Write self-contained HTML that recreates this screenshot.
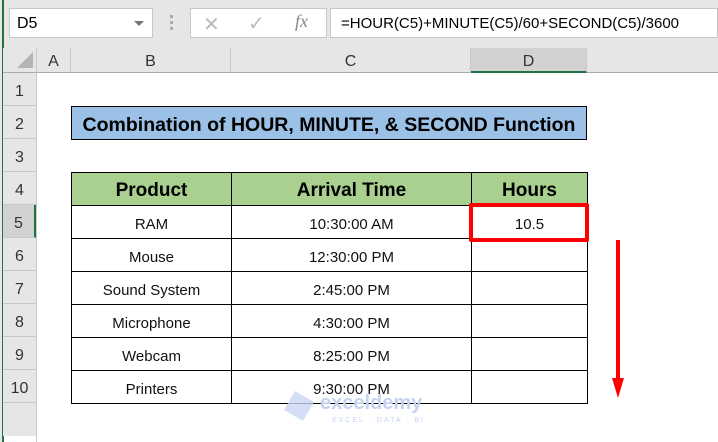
<!DOCTYPE html><html><head><style>
body{margin:0;width:718px;height:442px;overflow:hidden;background:#fff;font-family:"Liberation Sans",Arial,sans-serif;position:relative}
.a{position:absolute;box-sizing:border-box}
.rh{position:absolute;left:3px;width:33px;height:33px;background:#e6e6e6;border-bottom:1px solid #c8c8c8;font-size:16px;color:#333;text-align:center;line-height:38px;box-sizing:border-box}
.ch{position:absolute;top:48px;height:25px;border-right:1px solid #c8c8c8;font-size:16px;color:#333;text-align:center;line-height:28px;box-sizing:border-box;background:#e6e6e6;border-bottom:1px solid #ababab}
table{position:absolute;left:71px;top:172px;border-collapse:collapse}
td{border:1px solid #000;height:33px;padding:5px 0 0;box-sizing:border-box;text-align:center;font-size:15px;color:#111}
th{border:1px solid #000;height:33px;background:#a9d08e;font-size:19px;font-weight:bold;padding:4px 0 0;box-sizing:border-box}
</style></head><body>
<div class="a" style="left:0;top:0;width:718px;height:48px;background:#e6e6e6"></div>
<div class="a" style="left:0;top:0;width:3px;height:442px;background:#e6e6e6"></div>
<div class="a" style="left:2px;top:0;width:2px;height:442px;background:#217346"></div>
<div class="a" style="left:9px;top:8px;width:144px;height:30px;background:#fff;border:1px solid #c6c6c6;font-size:16px;padding:6px 0 0 7px">D5<span style="position:absolute;right:8px;top:12px;border:5px solid transparent;border-top:5px solid #777"></span></div>
<div class="a" style="left:170px;top:15px;width:3px;height:3px;background:#aaa;box-shadow:0 6px #aaa,0 12px #aaa"></div>
<div class="a" style="left:190px;top:8px;width:137px;height:30px;background:#fff;border:1px solid #c6c6c6"></div>
<div class="a" style="left:203px;top:12px;font-size:20px;color:#bbb">✕</div>
<div class="a" style="left:248px;top:11px;font-size:20px;color:#bbb">✓</div>
<div class="a" style="left:295px;top:11px;font-size:18px;color:#888;font-style:italic;font-family:'Liberation Serif',serif">fx</div>
<div class="a" style="left:330px;top:8px;width:388px;height:30px;background:#fff;border:1px solid #c6c6c6;font-size:15px;padding:6px 0 0 10px">=HOUR(C5)+MINUTE(C5)/60+SECOND(C5)/3600</div>
<div class="a" style="left:3px;top:48px;width:34px;height:25px;background:#e6e6e6;border-right:1px solid #c8c8c8;border-bottom:1px solid #ababab"></div>
<div class="a" style="left:17px;top:52px;border-style:solid;border-width:0 0 16px 16px;border-color:transparent transparent #b4b4b4 transparent"></div>
<div class="ch" style="left:37px;width:34px">A</div>
<div class="ch" style="left:71px;width:160px">B</div>
<div class="ch" style="left:231px;width:240px">C</div>
<div class="ch" style="left:471px;width:116px;background:#d2d2d2;border-bottom:2px solid #217346">D</div>
<div class="ch" style="left:587px;width:131px;border-right:none"></div>
<div class="a" style="left:36px;top:73px;width:1px;height:369px;background:#c8c8c8"></div>
<div class="rh" style="top:73px">1</div><div class="rh" style="top:106px">2</div><div class="rh" style="top:139px">3</div><div class="rh" style="top:172px">4</div>
<div class="rh" style="top:205px;background:#d2d2d2;border-right:2px solid #217346">5</div>
<div class="rh" style="top:238px">6</div><div class="rh" style="top:271px">7</div><div class="rh" style="top:304px">8</div><div class="rh" style="top:337px">9</div><div class="rh" style="top:370px">10</div>
<div class="rh" style="top:403px;border-bottom:none"></div>
<div class="a" style="left:71px;top:106px;width:516px;height:34px;background:#9bc2e6;border:1px solid #000;font-size:19.5px;font-weight:bold;text-align:center;line-height:36px">Combination of HOUR, MINUTE, &amp; SECOND Function</div>
<table><tr><th style="width:160px">Product</th><th style="width:240px">Arrival Time</th><th style="width:116px">Hours</th></tr>
<tr><td>RAM</td><td>10:30:00 AM</td><td>10.5</td></tr>
<tr><td>Mouse</td><td>12:30:00 PM</td><td></td></tr>
<tr><td>Sound System</td><td>2:45:00 PM</td><td></td></tr>
<tr><td>Microphone</td><td>4:30:00 PM</td><td></td></tr>
<tr><td>Webcam</td><td>8:25:00 PM</td><td></td></tr>
<tr><td>Printers</td><td>9:30:00 PM</td><td></td></tr></table>
<div class="a" style="left:469px;top:203px;width:120px;height:39px;border:4px solid #f00;border-radius:2px"></div>
<div class="a" style="left:616px;top:240px;width:4px;height:140px;background:#f00"></div>
<div class="a" style="left:612px;top:378px;border-style:solid;border-width:20px 6px 0 6px;border-color:#f00 transparent transparent transparent"></div>
<div class="a" style="left:288px;top:395px;width:22px;height:22px;background:#c9d6f2;transform:rotate(30deg);opacity:.8"></div>
<div class="a" style="left:320px;top:392px;font-size:20px;font-weight:bold;color:#c5d3f3">exceldemy</div>
<div class="a" style="left:332px;top:417px;font-size:7px;letter-spacing:2px;color:#c5d3f3">EXCEL · DATA · BI</div>
</body></html>
